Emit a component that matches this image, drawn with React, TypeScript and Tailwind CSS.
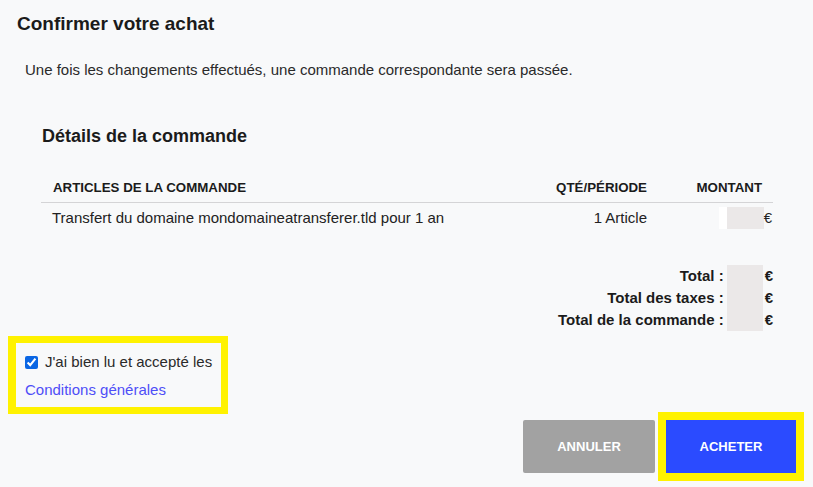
import * as React from 'react';

const Blur = ({ className }: { className: string }) => (
    <span className={`inline-block bg-[#ebe8e8] ${className}`} />
);

export default function App() {
    return (
        <div className="w-[813px] h-[487px] overflow-hidden bg-[#f8f9fa] text-[#222] font-['Liberation_Sans',Arial,sans-serif]">
            <h1 className="pt-[10px] pl-[17px] text-[19px] leading-[28px] font-bold text-[#1b1b1b]">Confirmer votre achat</h1>
            <p className="mt-[22px] pl-[25px] text-[15px] leading-[20px] text-[#2a2a2a]">
                Une fois les changements effectués, une commande correspondante sera passée.
            </p>

            <div className="mt-[44px] pl-[41px] pr-[40px]">
                <h2 className="pl-[1px] text-[18px] leading-[24px] font-bold text-[#1b1b1b]">Détails de la commande</h2>

                <div className="mt-[31px] grid grid-cols-[1fr_120px_126px]">
                    <div className="pl-[12px] pb-[5px] border-b border-[#d4d4d6] text-[13.3px] leading-[18px] font-bold uppercase text-[#1b1b1b]">Articles de la commande</div>
                    <div className="pb-[5px] border-b border-[#d4d4d6] text-right text-[13.3px] leading-[18px] font-bold uppercase text-[#1b1b1b]">Qté/Période</div>
                    <div className="pr-[11px] pb-[5px] border-b border-[#d4d4d6] text-right text-[13.3px] leading-[18px] font-bold uppercase text-[#1b1b1b]">Montant</div>

                    <div className="pl-[11px] pt-[5px] text-[15px] leading-[20px]">Transfert du domaine mondomaineatransferer.tld pour 1 an</div>
                    <div className="pt-[5px] text-right text-[15px] leading-[20px]">1 Article</div>
                    <div className="pt-[4px] flex justify-end items-start text-[15px] leading-[20px]">
                        <span className="flex h-[22px] w-[45px] bg-white">
                            <Blur className="ml-[8px] w-[37px] h-[22px]" />
                        </span>
                        <span className="pt-[1px] pr-[1px]">€</span>
                    </div>
                </div>

                <div className="mt-[36px] flex justify-end">
                    <div className="flex flex-col items-end text-[15px] leading-[22px] font-bold text-[#1b1b1b]">
                        <span>Total :</span>
                        <span>Total des taxes :</span>
                        <span>Total de la commande :</span>
                    </div>
                    <Blur className="ml-[3px] w-[36px] h-[66px]" />
                    <div className="flex flex-col pl-[2px] text-[15px] leading-[22px] font-bold text-[#1b1b1b]">
                        <span>€</span>
                        <span>€</span>
                        <span>€</span>
                    </div>
                </div>
            </div>

            <div className="mt-[5px] flex justify-between items-start pl-[8px] pr-[9px]">
                <div className="w-[220px] h-[78px] border-[7px] border-l-8 border-[#fff200] bg-[#f8f9fa] pl-[9px] pt-[9px]">
                    <label className="flex items-center gap-[7px] text-[15px] leading-[20px] text-[#2a2a2a]">
                        <input type="checkbox" defaultChecked className="w-[13px] h-[13px] accent-[#0a66e4]" />
                        J'ai bien lu et accepté les
                    </label>
                    <a className="mt-[8px] block text-[15px] leading-[20px] text-[#4e4ef7]">Conditions générales</a>
                </div>

                <div className="mt-[76px] flex items-center">
                    <button className="w-[132px] h-[53px] rounded-[2px] bg-[#a2a2a2] text-white text-[13px] font-bold uppercase">Annuler</button>
                    <div className="ml-[3px] border-[8px] border-[#fff200]">
                        <button className="block w-[130px] h-[53px] bg-[#2b4bff] text-white text-[13px] font-bold uppercase">Acheter</button>
                    </div>
                </div>
            </div>
        </div>
    );
}
